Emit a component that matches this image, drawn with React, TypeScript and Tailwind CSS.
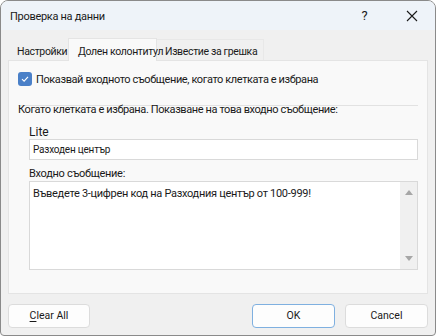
import React from "react";

const font = { fontFamily: 'Roboto, "Noto Sans", sans-serif' };

export default function App() {
  return (
    <div className="w-[436px] h-[336px] bg-white" style={font}>
      <div className="w-[436px] h-[336px] flex flex-col rounded-t-[8px] rounded-b-[4px] border border-[#8a8a8a] bg-[#f0f0f0] overflow-hidden text-[#1a1a1a]">
        {/* Title bar */}
        <div className="h-[29px] flex items-center bg-[#eef3f9] shrink-0">
          <div className="pl-[9px] text-[11px] tracking-[-0.3px] leading-none flex-1 pt-[1px]">Проверка на данни</div>
          <div className="w-[45px] text-center text-[13px] leading-none mr-[2px]">?</div>
          <div className="w-[46px] flex justify-center">
            <svg width="12" height="12" viewBox="0 0 12 12">
              <path d="M1 1 L11 11 M11 1 L1 11" stroke="#1a1a1a" strokeWidth="1.1" />
            </svg>
          </div>
        </div>
        {/* Tabs */}
        <div className="px-[7px] pt-[8px] flex flex-col flex-1">
          <div className="flex items-end h-[22px] text-[10.5px] tracking-[-0.35px] leading-none whitespace-nowrap">
            <div className="w-[60px] h-[20px] pl-[9px] flex items-end pb-[3px]">Настройки</div>
            <div className="w-[89px] h-[23px] pl-[9px] flex items-end pb-[4px] bg-[#f9f9f9] border border-b-0 border-[#e4e4e4] relative top-[1px] z-10">
              Долен колонтитул
            </div>
            <div className="h-[21px] pl-[8px] pr-[6px] flex items-end pb-[3px] border-t border-r border-[#e8e8e8]">Известие за грешка</div>
          </div>
          <div className="h-[234px] bg-[#f9f9f9] border border-[#e4e4e4] pl-[9px] pr-[9px] pt-[11px] flex flex-col">
            <div className="flex items-center h-[14px]">
              <div className="w-[14px] h-[14px] rounded-[3px] bg-[#4a80c8] flex items-center justify-center">
                <svg width="10" height="10" viewBox="0 0 10 10">
                  <path d="M2 5.2 L4.1 7.2 L8 2.8" stroke="#ffffff" strokeWidth="1.1" fill="none" />
                </svg>
              </div>
              <span className="ml-[4px] text-[11px] tracking-[-0.4px] leading-none">Показвай входното съобщение, когато клетката е избрана</span>
            </div>
            <div className="mt-[19px] border-t border-[#e2e2e2]" />
            <div className="-mt-[3px] text-[11px] tracking-[-0.4px] leading-[14px]">Когато клетката е избрана. Показване на това входно съобщение:</div>
            <div className="pl-[11px] flex flex-col">
              <div className="mt-[8px] text-[12px] leading-[14px]">Lite</div>
              <div className="h-[21px] bg-white border border-[#d9d9d9] flex items-center pl-[3px] text-[10px] tracking-[-0.2px] leading-none">
                Разходен център
              </div>
              <div className="mt-[7px] text-[11px] tracking-[-0.3px] leading-[14px]">Входно съобщение:</div>
              <div className="h-[89px] bg-white border border-[#d9d9d9] flex">
                <div className="flex-1 pl-[3px] pt-[5px] text-[11px] tracking-[-0.3px] leading-[14px]">
                  Въведете 3-цифрен код на Разходния център от 100-999!
                </div>
                <div className="w-[17px] bg-[#f0f0f0] flex flex-col items-center justify-between py-[8px]">
                  <svg width="8" height="5" viewBox="0 0 8 5"><path d="M0 5 L4 0 L8 5 Z" fill="#a6a6a6" /></svg>
                  <svg width="8" height="5" viewBox="0 0 8 5"><path d="M0 0 L4 5 L8 0 Z" fill="#a6a6a6" /></svg>
                </div>
              </div>
            </div>
          </div>
          {/* Buttons */}
          <div className="flex items-center mt-[10px] text-[10.5px] leading-none">
            <button className="w-[82px] h-[24px] bg-[#fdfdfd] border border-[#dcdcdc] rounded-[4px]">
              <span className="underline underline-offset-2">C</span>lear All
            </button>
            <div className="flex-1" />
            <button className="w-[83px] h-[24px] bg-[#fdfdfd] border border-[#7fb0e0] rounded-[4px]">OK</button>
            <button className="ml-[10px] w-[83px] h-[24px] bg-[#fdfdfd] border border-[#dcdcdc] rounded-[4px]">Cancel</button>
          </div>
        </div>
      </div>
    </div>
  );
}
